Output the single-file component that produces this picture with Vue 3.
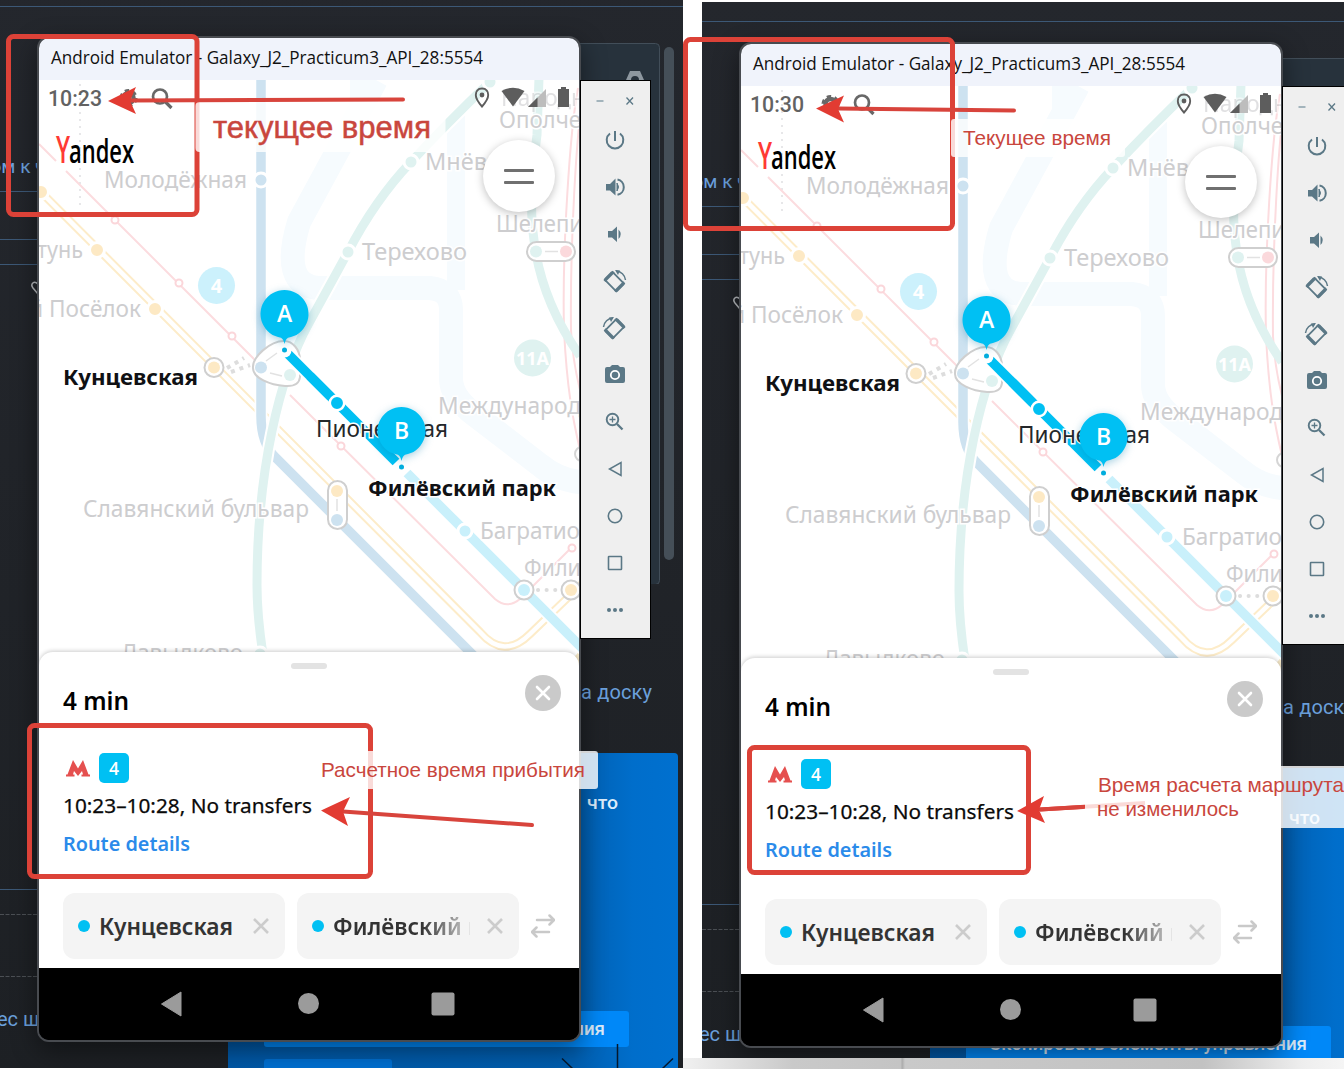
<script setup>
import { h } from 'vue'

const panes = [
  { id: 'before', time: '10:23' },
  { id: 'after', time: '10:30' },
]

// Single text line stretched to an exact advance width
const Fit = (p) =>
  h('svg', { class: 'fit', width: p.w + 2, height: p.lh, style: { fontSize: p.size + 'px' } }, [
    h('text', { x: 0, y: p.base, textLength: p.w, lengthAdjust: 'spacingAndGlyphs', fill: 'currentColor' }, p.text),
  ])
Fit.props = ['text', 'w', 'lh', 'size', 'base']

const labels = [
  { t: 'Народн', x: 501, y: 106, w: 84, o: 0.6 },
  { t: 'Ополче', x: 499, y: 128, w: 82 },
  { t: 'Мнёвни', x: 425, y: 170, w: 91 },
  { t: 'Молодёжная', x: 104, y: 188, w: 143 },
  { t: 'Шелепи', x: 496, y: 232, w: 87 },
  { t: 'Терехово', x: 362, y: 260, w: 105 },
  { t: 'тунь', x: 37, y: 258, w: 46 },
  { t: 'й', x: 30, y: 317, w: 13 },
  { t: 'Посёлок', x: 49, y: 317, w: 92 },
  { t: 'Международ', x: 438, y: 414, w: 143 },
  { t: 'Славянский бульвар', x: 83, y: 517, w: 226 },
  { t: 'Багратио', x: 480, y: 539, w: 100 },
  { t: 'Фили', x: 524, y: 576, w: 57 },
  { t: 'Давыдково', x: 121, y: 661, w: 122 },
]
</script>

<template>
  <main class="board">
    <section v-for="p in panes" :key="p.id" :class="['pane', p.id]">
      <svg class="backdrop" width="683" height="1069" viewBox="0 0 683 1069">
        <defs>
          <linearGradient id="dk" x1="0" y1="0" x2="0" y2="1"><stop offset="0" stop-color="#24272d" /><stop offset="1" stop-color="#1d2024" /></linearGradient>
          <linearGradient id="bl" x1="0" y1="0" x2="1" y2="0"><stop offset="0" stop-color="#0058a6" /><stop offset=".77" stop-color="#005eaf" /><stop offset=".9" stop-color="#006ecb" /><stop offset="1" stop-color="#0070cf" /></linearGradient>
        </defs>
        <rect y="-20" width="683" height="1100" fill="url(#dk)" />
        <path d="M0 6.5H683M0 191.5H38M0 239.5H38M0 264.5H38M0 889.5H38" stroke="#3c5876" />
        <path d="M0 914.5H38M0 976.5H38" stroke="#4b4f54" stroke-dasharray="4 1.5" />
        <rect x="500" y="43.5" width="159.500" height="541" rx="4" fill="#27323c" stroke="#424e59" />
        <rect x="500" y="584" width="160" height="2" fill="#212429" />
        <rect x="664" y="47" width="10" height="513" rx="5" fill="#454f58" />
        <path d="M626 80L630 71H640L644 80H639A4 4 0 0 0 631 80Z" fill="#8d979f" />
        <path d="M38 284C34 280 30 284 33 288L38 294" fill="none" stroke="#b9bcc0" stroke-width="1.500" />
        <text x="-9.500" y="173" class="link tight">ом к ч</text>
        <text x="-3" y="1026" class="link">ес шаг</text>
        <text x="581" y="699" textLength="71" class="link">а доску</text>
        <rect x="228" y="753" width="450" height="330" rx="4" fill="url(#bl)" />
        <text x="587" y="809" textLength="31" lengthAdjust="spacingAndGlyphs" class="btn">что</text>
        <rect x="579" y="861" width="2" height="2" fill="#cfe0f0" />
        <rect x="264" y="1011" width="365" height="36" rx="3" fill="#0088f8" />
        <rect x="264" y="1059" width="128" height="20" rx="3" fill="#0070d2" />
        <text x="287" y="1035" textLength="318" lengthAdjust="spacingAndGlyphs" class="btn">Скопировать элементы управления</text>
        <path d="M617.500 1044V1069M562 1058.500L573 1069M673 1058.500L662 1069" stroke="#06182c" stroke-width="1.500" />
      </svg>

      <div class="device">
        <article class="phone">
          <header class="titlebar">
            <Fit text="Android Emulator - Galaxy_J2_Practicum3_API_28:5554" :w="432" :lh="42" :size="17.5" :base="26" />
          </header>
          <div class="mapwrap">
            <svg class="map" width="540" height="594" viewBox="39 80 540 594">
              <g fill="none" stroke="#f6fbfe" stroke-width="24">
                <path d="M376 80L299 222Q280 285 318 288H430Q451 290 451 310V380Q452 398 475 415L540 465Q558 480 580 482" />
                <path d="M359 80V112M456 116V290" stroke-width="18" />
              </g>
              <path d="M80 84V210" stroke="#e7e7e9" stroke-width="2" stroke-dasharray="2 5" />
              <path d="M39 144L56 161M66 171L264 369M290 395L495 599Q508 610 521 598L572 547" class="pink" />
              <path d="M578 88C570 130 562 250 564 330C567 390 573 420 580 450M584 88C576 130 570 250 571 330C572 350 575 370 580 390" class="pink" />
              <path d="M36 187L480 632Q504 660 530 634L582 584" fill="none" stroke="#fdecc9" stroke-width="8.500" />
              <path d="M36 187L480 632Q504 660 530 634L582 584" fill="none" stroke="#fff" stroke-width="4.500" />
              <path d="M570 662L582 648V674H560Z" fill="#f3e6c6" />
              <path d="M261 80V416Q261 444 276 458L490 672" fill="none" stroke="#fff" stroke-width="13" />
              <path d="M261 80V416Q261 444 276 458L490 672" fill="none" stroke="#cde2f0" stroke-width="9.500" />
              <path d="M490 82Q446 124 411 162Q375 200 348 252L309 323C280 375 257 470 257 585Q257 615 263 655" fill="none" stroke="#fff" stroke-width="13" />
              <g fill="none" stroke="#dff2f0" stroke-width="9">
                <path d="M490 82Q446 124 411 162Q375 200 348 252L309 323C280 375 257 470 257 585Q257 615 263 655" />
                <path d="M539 78L537 135Q528 200 534 240Q541 300 580 356" />
              </g>
              <path d="M401 467L590 656" stroke="#fff" stroke-width="13" />
              <path d="M407 473L590 656" stroke="#c9f0fb" stroke-width="9.500" />
              <path d="M284 350L401 467" stroke="#fff" stroke-width="12" />
              <path d="M288 354L396 462" stroke="#00c0f3" stroke-width="9.500" />

              <g stroke="#fff" stroke-width="3">
                <circle cx="261" cy="180" r="7" fill="#cde2f0" />
                <circle v-for="c in [[411,162],[348,252],[490,82],[260,654]]" :key="c[0]" :cx="c[0]" :cy="c[1]" r="7" fill="#dff2f0" />
                <circle v-for="c in [[41,192],[97,250],[155,309]]" :key="c[0]" :cx="c[0]" :cy="c[1]" r="7.500" fill="#fde9c4" />
                <circle cx="465" cy="531" r="7" fill="#c9f0fb" />
              </g>
              <circle v-for="c in [[115,220],[179,283],[232,336],[341,446],[572,548]]" :key="c[0]" :cx="c[0]" :cy="c[1]" r="3.500" fill="#fff" stroke="#fbd6da" stroke-width="2" />

              <g fill="#fff" stroke="#cfcfcf" stroke-width="2">
                <circle cx="214" cy="367.500" r="9.500" />
                <circle cx="524" cy="590" r="9.500" />
                <circle cx="571" cy="590" r="9.500" />
                <rect x="328" y="481" width="19" height="48" rx="9.500" />
                <rect x="527" y="242" width="48" height="19" rx="9.500" />
                <path d="M284 341C293 341 300 350 300 360V377Q299 387 285 386C270 385 253 378 253 368C252 357 270 341 284 341Z" />
                <path d="M266 361L277 353M270 373L282 376M337 499V511M545 251.500H558" stroke="#e2e2e2" stroke-width="1.500" />
              </g>
              <circle cx="582" cy="454" r="7" fill="none" stroke="#d5d5d5" stroke-width="2" />
              <path d="M227 368L244 358M231 372L250 365" stroke="#ddd" stroke-width="4" stroke-dasharray="4 5" />
              <path d="M538 590H560" stroke="#ddd" stroke-width="4" stroke-linecap="round" stroke-dasharray=".1 8.500" />
              <circle cx="214" cy="367.500" r="6" fill="#fde9c4" />
              <circle cx="337" cy="491" r="6" fill="#fde9c4" />
              <circle cx="337" cy="520" r="6" fill="#cde2f0" />
              <circle cx="571" cy="590" r="6" fill="#fde9c4" />
              <circle cx="524" cy="590" r="6" fill="#c9f0fb" />
              <circle cx="261" cy="367.500" r="6" fill="#cde2f0" />
              <circle cx="290" cy="375" r="6" fill="#dff2f0" />
              <circle cx="536" cy="251.500" r="6" fill="#dff2f0" />
              <circle cx="566" cy="251.500" r="6" fill="#fbd9dc" />
              <path d="M288 354L310 376" stroke="#fff" stroke-width="13" />
              <path d="M288 354L331 397" stroke="#00c0f3" stroke-width="9.500" />
              <circle cx="337" cy="403" r="7.200" fill="#00c0f3" stroke="#fff" stroke-width="2.500" />

              <circle cx="216.500" cy="285.500" r="18.500" fill="#ccf1fc" />
              <text x="216.500" y="293" class="num">4</text>
              <circle cx="532.500" cy="358" r="18.500" fill="#dff2f0" />
              <text x="532.500" y="364.500" class="num small">11A</text>

              <text v-for="l in labels" :key="l.t" :x="l.x" :y="l.y" :textLength="l.w" lengthAdjust="spacingAndGlyphs" :opacity="l.o || 1" class="st">{{ l.t }}</text>
              <text x="316" y="437" textLength="132" lengthAdjust="spacingAndGlyphs" class="st on">Пионерская</text>
              <text x="63" y="385" textLength="135" lengthAdjust="spacingAndGlyphs" class="st strong">Кунцевская</text>
              <text x="368" y="496" textLength="188" lengthAdjust="spacingAndGlyphs" class="st strong">Филёвский парк</text>

              <g v-for="m in [['A',284.5,314],['B',401.5,431]]" :key="m[0]" :transform="`translate(${m[1]} ${m[2]})`">
                <circle cy="36.500" r="7" fill="#fff" />
                <circle cy="36" r="2.500" fill="#00aede" />
                <path class="bubble" d="M-3.500 23.700A24 24 0 1 1 3.500 23.700Q1 25 0 30Q-1 25 -3.500 23.700Z" fill="#00c0f3" />
                <text y="8" class="pin">{{ m[0] }}</text>
              </g>
            </svg>

            <div class="status">
              <Fit class="clock" :text="p.time" :w="54" :lh="36" :size="22" :base="26" />
              <svg class="sys" width="48" height="24" viewBox="0 0 48 24" fill="none" stroke="#686868">
                <circle cx="8.500" cy="11" r="5" stroke-width="4.500" />
                <circle cx="8.500" cy="11" r="7.800" stroke-width="2.500" stroke-dasharray="4.500 3.670" />
                <circle cx="40" cy="9.500" r="7" stroke-width="2.700" />
                <path d="M45 14.500L51.500 21" stroke-width="3.200" />
              </svg>
              <svg class="signals" width="98" height="24" viewBox="475 86 98 24">
                <path d="M482 88.500C477.500 88.500 475.800 92 475.800 95C475.800 99.500 482 106.500 482 106.500S488.200 99.500 488.200 95C488.200 92 486.500 88.500 482 88.500Z" fill="none" stroke="#5d5d5d" stroke-width="1.900" />
                <circle cx="482" cy="95" r="2.400" fill="#5d5d5d" />
                <path d="M501.500 91Q513 84.500 524.500 91L513 106.500Z" fill="#5d5d5d" />
                <path d="M546 89V107H528Z" fill="#bdbdbd" />
                <path d="M537.500 97.500V107H528Z" fill="#5d5d5d" />
                <path d="M558 89H561V87H566V89H569V107H558Z" fill="#5d5d5d" />
              </svg>
            </div>
            <svg class="brand" width="82" height="34" viewBox="0 0 82 34">
              <text x="0" y="27" textLength="14" lengthAdjust="spacingAndGlyphs" font-size="37" font-weight="600" fill="#ff3a34">Y</text>
              <text x="13" y="27" textLength="65" lengthAdjust="spacingAndGlyphs" font-size="32" font-weight="600" fill="#000">andex</text>
            </svg>
            <button class="menu"><i></i><i></i></button>
          </div>

          <div class="sheet">
            <div class="handle"></div>
            <div class="head">
              <Fit class="mid" text="4 min" :w="66" :lh="40" :size="25" :base="29" />
              <svg width="36" height="36" viewBox="0 0 36 36"><circle cx="18" cy="18" r="18" fill="#cacaca" /><path d="M12 12L24 24M24 12L12 24" stroke="#fff" stroke-width="2.600" stroke-linecap="round" /></svg>
            </div>
            <div class="route">
              <svg width="24" height="17" viewBox="0 0 24 17"><path d="M7 0L12 8.500L17 0L22.500 14.500H24V16.500H15.500V14.500H17L16 11L12 16L8 11L7 14.500H8.500V16.500H0V14.500H1.500Z" fill="#e5504f" /></svg>
              <span class="line">4</span>
            </div>
            <Fit class="when" text="10:23–10:28, No transfers" :w="249" :lh="38" :size="20.5" :base="24" />
            <Fit class="details" text="Route details" :w="127" :lh="38" :size="20.5" :base="24" />
            <div class="chips">
              <div class="chip"><b></b><Fit text="Кунцевская" :w="134" :lh="30" :size="23.5" :base="24" /><svg class="x" width="18" height="18" viewBox="0 0 18 18"><path d="M2 2L16 16M16 2L2 16" /></svg></div>
              <div class="chip faded"><b></b><Fit text="Филёвский п" :w="149" :lh="30" :size="23.5" :base="24" /><svg class="x" width="18" height="18" viewBox="0 0 18 18"><path d="M2 2L16 16M16 2L2 16" /></svg></div>
              <svg width="24" height="24" viewBox="0 0 24 24" fill="none" stroke="#c9c9c9" stroke-width="2.500" stroke-linecap="round" stroke-linejoin="round"><path d="M6 6H22.500M18.500 1.500L23 6L18.500 10.500M18 18H1.500M5.500 13.500L1 18L5.500 22.500" /></svg>
            </div>
          </div>
          <nav class="nav">
            <svg width="540" height="72" viewBox="39 968 540 72" fill="#9b9b9b"><path d="M181 992L161.500 1004L181 1016Z" stroke="#9b9b9b" stroke-linejoin="round" /><circle cx="308.500" cy="1003.500" r="10.500" /><rect x="431.500" y="992.500" width="23" height="23" rx="2" /></svg>
          </nav>
        </article>

        <aside class="tools">
          <svg width="69" height="557" viewBox="581 81 69 557" fill="none" stroke="#5b7886" stroke-width="2">
            <path d="M596.500 101H603.500" stroke="#8aa0ab" stroke-width="1.500" /><path d="M626.500 97.500L633 104.500M633 97.500L626.500 104.500" stroke-width="1.300" />
            <path d="M615 131V141M610 133.500A8.300 8.300 0 1 0 620 133.500" />
            <path d="M606 184H610L615.500 178.500V195.500L610 190.500H606Z" fill="#5b7886" stroke="none" /><path d="M617 183Q620 187 617 191Z" fill="#5b7886" stroke-width="1" /><path d="M617.500 179.500A7.800 7.800 0 0 1 617.500 194.800" />
            <path d="M608 231H612L617 226.500V242L612 237.500H608ZM618.500 229.500Q623 234 618.500 239Z" fill="#5b7886" stroke="none" />
            <g><g transform="rotate(-45 614 282)"><rect x="609" y="273.500" width="11" height="17" rx="1" stroke-width="1.800" /><path d="M608 274.500H621M608 289.500H621" stroke-width="3" /></g><path d="M616 271A10 10 0 0 1 625.500 280" stroke-width="1.500" /><path d="M615 270L620 270.500L618 275Z" fill="#5b7886" stroke="none" /></g>
            <g transform="translate(1229 47) scale(-1 1)"><g transform="rotate(-45 614 282)"><rect x="609" y="273.500" width="11" height="17" rx="1" stroke-width="1.800" /><path d="M608 274.500H621M608 289.500H621" stroke-width="3" /></g><path d="M616 271A10 10 0 0 1 625.500 280" stroke-width="1.500" /><path d="M615 270L620 270.500L618 275Z" fill="#5b7886" stroke="none" /></g>
            <path d="M607 367H610L612 365H618L620 367H623Q625 367 625 369V381Q625 383 623 383H607Q605 383 605 381V369Q605 367 607 367Z" fill="#5b7886" stroke="none" /><circle cx="615" cy="375" r="4.200" stroke="#fff" stroke-width="1.800" />
            <circle cx="612.500" cy="419.500" r="5.800" stroke-width="1.900" /><path d="M617 424L622.500 429.500" stroke-width="2.300" /><path d="M609.500 419.500H615.500M612.500 416.500V422.500" stroke-width="1.300" />
            <path d="M621 462.500V475.500L609.500 469Z" stroke-width="1.500" />
            <circle cx="615" cy="516" r="6.700" stroke-width="1.600" />
            <rect x="608.500" y="556.500" width="13" height="13" rx=".5" stroke-width="1.600" />
            <g fill="#5b7886" stroke="none"><circle cx="609" cy="610" r="2" /><circle cx="615" cy="610" r="2" /><circle cx="621" cy="610" r="2" /></g>
          </svg>
        </aside>
      </div>
    </section>

    <div class="floor"></div>

    <svg class="notes" width="1344" height="1069" viewBox="0 0 1344 1069">
      <g fill="none" stroke="#dc4238" stroke-width="5">
        <rect x="8.500" y="36.500" width="188.500" height="178" rx="5" />
        <rect x="29.500" y="725.500" width="341" height="151" rx="5" />
        <rect x="685.500" y="39.500" width="267" height="189" rx="5" />
        <rect x="749.500" y="747.500" width="279" height="125" rx="5" />
      </g>
      <path d="M1040 809.500L1145 803" stroke="#e23b32" stroke-width="4" />
      <g fill="#fff" fill-opacity=".81">
        <rect x="195.500" y="102" width="250" height="50" rx="4" />
        <rect x="313" y="751" width="285" height="38" rx="3" />
        <rect x="951" y="119" width="174" height="38" rx="3" />
        <rect x="1085" y="766" width="270" height="62" />
      </g>
      <g stroke="#d8443c" stroke-width="4" stroke-linecap="round">
        <path d="M403 99.500L130 100.500M532 825L343 811.500M1014 110.500L838 108.500M1083 807L1040 809.500" />
      </g>
      <path d="M108 101L136 87L130 101L136 114ZM321 810.500L350 797L343 811.500L348 826ZM816 108.500L844 95.500L838 109L844 122.500ZM1017 811L1044 796L1039 810L1045 823Z" fill="#e23b32" />
      <g class="note">
        <text x="213" y="138" textLength="218" lengthAdjust="spacingAndGlyphs" font-size="31" stroke="#c9463d" stroke-width=".5">текущее время</text>
        <text x="321" y="777" textLength="264" lengthAdjust="spacingAndGlyphs">Расчетное время прибытия</text>
        <text x="963" y="145" textLength="148" lengthAdjust="spacingAndGlyphs">Текущее время</text>
        <text x="1098" y="792" textLength="246" lengthAdjust="spacingAndGlyphs">Время расчета маршрута</text>
        <text x="1097" y="815.500" textLength="142" lengthAdjust="spacingAndGlyphs">не изменилось</text>
      </g>
    </svg>
  </main>
</template>

<style>
body { margin: 0; background: #fff; }
</style>
<style scoped>
.board { position: relative; display: flex; gap: 19px; width: 1344px; height: 1069px; overflow: hidden; background: #fff; font-family: "Noto Sans", "Open Sans", sans-serif; }
.pane { position: relative; flex: none; overflow: hidden; width: 683px; height: 1068px; }
.pane.after { width: 642px; height: 1056px; margin-top: 2px; }
.backdrop { position: absolute; left: 0; top: 0; overflow: visible; }
.after .backdrop { top: 13px; }
.link { font: 20px Roboto, sans-serif; fill: #6ba0dc; }
.link.tight { font-size: 19px; }
.btn { font: 500 19px Roboto, sans-serif; fill: #dcecfb; }
.device { position: absolute; left: 37px; top: 36px; display: flex; }
.after .device { top: 40px; }
.phone { box-sizing: border-box; flex: none; width: 544px; height: 1006px; border: 2px solid #484b50; border-radius: 12px; overflow: hidden; background: #000; box-shadow: 0 8px 26px rgba(0,0,0,.45); }
.titlebar { display: flex; height: 42px; padding-left: 12px; background: #f0f3fb; color: #111; font-family: "Open Sans", sans-serif; }
.fit { display: block; flex: none; overflow: visible; }
.mapwrap { position: relative; height: 588px; overflow: hidden; background: #fff; }
.map { position: absolute; left: 0; top: 0; }
.pink { fill: none; stroke: #fcdcdf; stroke-width: 2; }
.st { font-size: 23px; fill: #cdcdcf; stroke: #fff; stroke-width: 3px; paint-order: stroke; }
.st.on { fill: #24272a; }
.st.strong { fill: #101114; font-weight: 700; font-size: 22px; }
.num { font: 700 20px "Noto Sans", sans-serif; fill: #fff; text-anchor: middle; }
.num.small { font-size: 18px; }
.pin { font: 600 23px "Open Sans", sans-serif; fill: #fff; text-anchor: middle; }
.bubble { filter: drop-shadow(0 2px 4px rgba(0,120,170,.35)); }
.status { position: relative; display: flex; height: 36px; }
.clock { margin-left: 9px; color: #626262; font-family: Roboto, sans-serif; font-weight: 500; }
.sys { margin: 7px 0 0 16px; overflow: visible; }
.signals { margin: 6px 6px 0 auto; overflow: visible; }
.brand { position: relative; display: block; margin: 20px 0 0 17px; font-family: "Open Sans", sans-serif; overflow: visible; }
.menu { position: absolute; left: 444px; top: 60px; display: flex; flex-direction: column; align-items: center; justify-content: center; gap: 9px; width: 72px; height: 72px; padding: 0; border: 0; border-radius: 50%; background: #fff; box-shadow: 0 2px 8px rgba(0,0,0,.25); }
.menu i { width: 30px; height: 3px; border-radius: 1px; background: #707070; }
.sheet { position: relative; box-sizing: border-box; height: 316px; margin-top: -16px; padding: 11px 24px 0; border-radius: 14px 14px 0 0; background: #fff; box-shadow: 0 -1px 4px rgba(0,0,0,.2); }
.handle { width: 36px; height: 6px; margin: 0 auto; border-radius: 3px; background: #e3e3e3; }
.head { box-sizing: border-box; display: flex; align-items: flex-start; justify-content: space-between; height: 84px; margin-right: -6px; padding-top: 6px; }
.head .mid { margin-top: 6px; font-weight: 600; }
.route { display: flex; align-items: center; gap: 9px; height: 30px; padding-left: 3px; }
.line { width: 30px; height: 30px; border-radius: 5px; background: #00c0f3; color: #fff; font: 600 17.5px/30px "Open Sans", sans-serif; text-align: center; }
.when { margin-top: 6px; color: #0a0a0a; stroke: #0a0a0a; stroke-width: .25px; }
.details { color: #2b8bea; font-weight: 600; }
.chips { display: flex; align-items: center; gap: 12px; margin-top: 28px; }
.chip { box-sizing: border-box; display: flex; align-items: center; width: 222px; height: 66px; padding: 0 15px; border-radius: 12px; background: #f4f4f4; color: #333; font-weight: 600; flex: none; }
.chip b { width: 12px; height: 12px; margin-right: 9px; border-radius: 50%; background: #00c0f3; flex: none; }
.chip .x { margin-left: auto; fill: none; stroke: #ccc; stroke-width: 2.6; flex: none; }
.chip.faded .fit { width: 137px; overflow: hidden; -webkit-mask-image: linear-gradient(90deg, #000 65%, transparent 108%); mask-image: linear-gradient(90deg, #000 65%, transparent 108%); }
.nav { position: relative; height: 72px; background: #000; }
.nav svg { display: block; }
.tools { position: relative; flex: none; box-sizing: border-box; width: 71px; height: 559px; margin: 44px 0 0 -1px; border: 1px solid #000; background: #efefef; }
.tools svg { display: block; }
.floor { position: absolute; left: 683px; right: 0; top: 1058px; height: 11px; background: linear-gradient(90deg, #f1f1f1, #c9c9c9 110px, #c4c4c4 218px, #aaa 219px, #c9c9c9 222px, #c2c2c2 520px, #eee 620px, #f5f5f5); }
.notes { position: absolute; left: 0; top: 0; }
.note { font-family: "Liberation Sans", Arial, sans-serif; font-size: 21px; fill: #c9463d; }
</style>
